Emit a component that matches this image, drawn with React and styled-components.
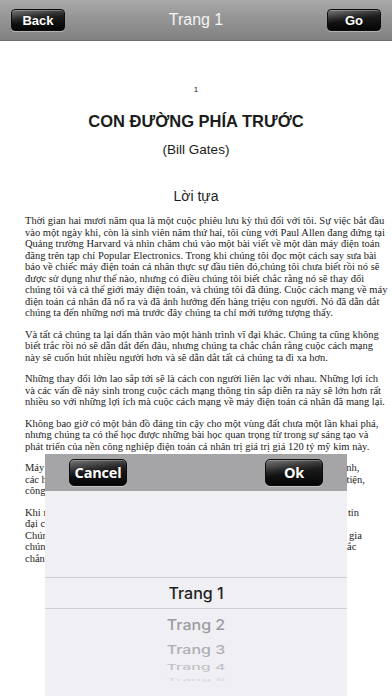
import styled, { createGlobalStyle } from 'styled-components';

const GlobalStyle = createGlobalStyle`
  html, body {
    margin: 0;
    padding: 0;
    background: #ffffff;
  }
  #root {
    width: 392px;
    height: 696px;
    overflow: hidden;
    position: relative;
  }
`;

const paragraphs = [
  [
    'Thời gian hai mươi năm qua là một cuộc phiêu lưu kỳ thú đối với tôi. Sự việc bắt đầu',
    'vào một ngày khi, còn là sinh viên năm thứ hai, tôi cùng với Paul Allen đang đứng tại',
    'Quảng trường Harvard và nhìn chăm chú vào một bài viết về một dàn máy điện toán',
    'đăng trên tạp chí Popular Electronics. Trong khi chúng tôi đọc một cách say sưa bài',
    'báo về chiếc máy điện toán cá nhân thực sự đầu tiên đó,chúng tôi chưa biết rồi nó sẽ',
    'được sử dụng như thế nào, nhưng có điều chúng tôi biết chắc rằng nó sẽ thay đổi',
    'chúng tôi và cả thế giới máy điện toán, và chúng tôi đã đúng. Cuộc cách mạng về máy',
    'điện toán cá nhân đã nổ ra và đã ảnh hưởng đến hàng triệu con người. Nó đã dẫn dắt',
    'chúng ta đến những nơi mà trước đây chúng ta chỉ mới tưởng tượng thấy.',
  ],
  [
    'Và tất cả chúng ta lại dấn thân vào một hành trình vĩ đại khác. Chúng ta cũng không',
    'biết trắc rồi nó sẽ dẫn dắt đến đâu, nhưng chúng ta chắc chắn rằng cuộc cách mạng',
    'này sẽ cuốn hút nhiều người hơn và sẽ dẫn dắt tất cả chúng ta đi xa hơn.',
  ],
  [
    'Những thay đổi lớn lao sắp tới sẽ là cách con người liên lạc với nhau. Những lợi ích',
    'và các vấn đề nảy sinh trong cuộc cách mạng thông tin sắp diễn ra này sẽ lớn hơn rất',
    'nhiều so với những lợi ích mà cuộc cách mạng về máy điện toán cá nhân đã mang lại.',
  ],
  [
    'Không bao giờ có một bản đồ đáng tin cậy cho một vùng đất chưa một lần khai phá,',
    'nhưng chúng ta có thể học được những bài học quan trọng từ trong sự sáng tạo và',
    'phát triển của nền công nghiệp điện toán cá nhân trị giá trị giá 120 tỷ mỹ kim này.',
  ],
  [
    'Máy điện toán cá nhân đã thay đổi cách chúng ta làm việc, học tập, kinh doanh,',
    'các hoạt động văn phòng cũng như sinh hoạt của mọi gia đình trở nên thuận tiện,',
    'công việc trở nên nhẹ nhàng và hiệu quả hơn.',
  ],
  [
    'Khi nhìn về tương lai, ta thấy cuộc cách mạng sắp tới sẽ là cách mạng thông tin',
    'đại chúng, với những xa lộ thông tin nối liền mọi người trên khắp thế giới.',
    'Chúng ta sẽ làm việc, học tập và giải trí ở bất cứ nơi nào, mỗi người sẽ tham gia',
    'chúng ta đều sẽ có những lựa chọn mới mà chưa hề tưởng tượng được, và chắc',
    'chắn cuộc sống sẽ trở nên phong phú hơn.',
  ],
];

const pages = [1, 2, 3, 4, 5];

const App = () => {
  return (
    <>
      <GlobalStyle />
      <Screen>
        <TopBar>
          <BarButton>Back</BarButton>
          <BarTitle>Trang 1</BarTitle>
          <BarButton>Go</BarButton>
        </TopBar>

        <Page>
          <PageNumber>1</PageNumber>
          <BookTitle>CON ĐƯỜNG PHÍA TRƯỚC</BookTitle>
          <Author>(Bill Gates)</Author>
          <SectionTitle>Lời tựa</SectionTitle>
          <Body>
            {paragraphs.map((lines, i) => (
              <Paragraph key={i}>
                {lines.map((line, j) => (
                  <Line key={j}>{line}</Line>
                ))}
              </Paragraph>
            ))}
          </Body>
        </Page>

        <PickerSheet>
          <SheetHeader>
            <SheetButton>Cancel</SheetButton>
            <SheetButton>Ok</SheetButton>
          </SheetHeader>
          <Wheel>
            {pages.map((n, i) => (
              <WheelItem key={n} $depth={i}>
                <WheelLabel $depth={i}>Trang {n}</WheelLabel>
              </WheelItem>
            ))}
          </Wheel>
        </PickerSheet>
      </Screen>
    </>
  );
};

export default App;

const Screen = styled.div`
  width: 392px;
  height: 696px;
  position: relative;
  overflow: hidden;
  background: #ffffff;
`;

const TopBar = styled.div`
  height: 41px;
  box-sizing: border-box;
  padding: 0 11px;
  display: flex;
  align-items: center;
  justify-content: space-between;
  background: linear-gradient(#a9a9a9 0%, #959595 45%, #818181 100%);
  border-bottom: 1px solid #6e6e6e;
`;

const glossy = `
  background:
    linear-gradient(170deg, rgba(255, 255, 255, 0.35) 0%, rgba(255, 255, 255, 0.08) 35%, rgba(255, 255, 255, 0) 50%),
    linear-gradient(#2e2e2e 0%, #151515 50%, #050505 100%);
  border: 1px solid #0d0d0d;
  box-shadow: 0 1px 0 rgba(255, 255, 255, 0.35), inset 0 1px 0 rgba(255, 255, 255, 0.25);
  color: #ffffff;
  display: flex;
  align-items: center;
  justify-content: center;
  box-sizing: border-box;
`;

const BarButton = styled.div`
  ${glossy}
  width: 54px;
  height: 22px;
  border-radius: 4px;
  font-family: 'Liberation Sans', Arial, sans-serif;
  font-weight: 700;
  font-size: 13px;
`;

const BarTitle = styled.div`
  font-family: 'Liberation Sans', Arial, sans-serif;
  font-size: 16px;
  color: #f4f4f4;
`;

const Page = styled.div`
  padding: 0 25px;
  color: #1c1c1c;
`;

const PageNumber = styled.div`
  margin-top: 44px;
  font-family: 'Liberation Sans', Arial, sans-serif;
  font-size: 8px;
  line-height: 10px;
  text-align: center;
`;

const BookTitle = styled.div`
  margin-top: 16px;
  font-family: 'Liberation Sans', Arial, sans-serif;
  font-weight: 700;
  font-size: 16.5px;
  line-height: 20px;
  text-align: center;
`;

const Author = styled.div`
  margin-top: 11px;
  font-family: 'Liberation Sans', Arial, sans-serif;
  font-size: 13.5px;
  line-height: 16px;
  text-align: center;
`;

const SectionTitle = styled.div`
  margin-top: 30px;
  font-family: 'Liberation Sans', Arial, sans-serif;
  font-size: 14px;
  line-height: 17px;
  text-align: center;
`;

const Body = styled.div`
  margin-top: 10px;
  font-family: 'Liberation Serif', 'Times New Roman', serif;
  font-size: 10.5px;
  line-height: 11.5px;
`;

const Paragraph = styled.div`
  & + & {
    margin-top: 10px;
  }
`;

const Line = styled.span`
  display: block;
  white-space: nowrap;
`;

const PickerSheet = styled.div`
  position: absolute;
  left: 45px;
  top: 454px;
  width: 302px;
  bottom: 0;
  display: flex;
  flex-direction: column;
  background: #efeff4;
`;

const SheetHeader = styled.div`
  height: 37px;
  box-sizing: border-box;
  padding: 0 24px;
  display: flex;
  align-items: center;
  justify-content: space-between;
  background: #a5a5a8;
`;

const SheetButton = styled.div`
  ${glossy}
  width: 58px;
  height: 27px;
  border-radius: 5px;
  font-family: 'Open Sans', 'DejaVu Sans', sans-serif;
  font-weight: 700;
  font-size: 14.5px;
  letter-spacing: -0.2px;
`;

const Wheel = styled.div`
  padding-top: 86px;
  display: flex;
  flex-direction: column;
`;

const itemHeights = [32, 30, 20, 16, 9];
const itemColors = ['#1f1f21', '#9c9ca1', '#aeaeb3', '#c3c3c7', '#d9d9dd'];
const itemScales = [1, 0.92, 0.75, 0.5, 0.22];

const WheelItem = styled.div`
  height: ${(p) => itemHeights[p.$depth]}px;
  display: flex;
  align-items: center;
  justify-content: center;
  box-sizing: border-box;
  ${(p) =>
    p.$depth === 0 &&
    `
    border-top: 1px solid #cfcfd3;
    border-bottom: 1px solid #cfcfd3;
  `}
`;

const WheelLabel = styled.div`
  font-family: Inter, 'Noto Sans', sans-serif;
  font-weight: 500;
  font-size: 16px;
  line-height: 20px;
  color: ${(p) => itemColors[p.$depth]};
  transform: scaleY(${(p) => itemScales[p.$depth]});
`;
